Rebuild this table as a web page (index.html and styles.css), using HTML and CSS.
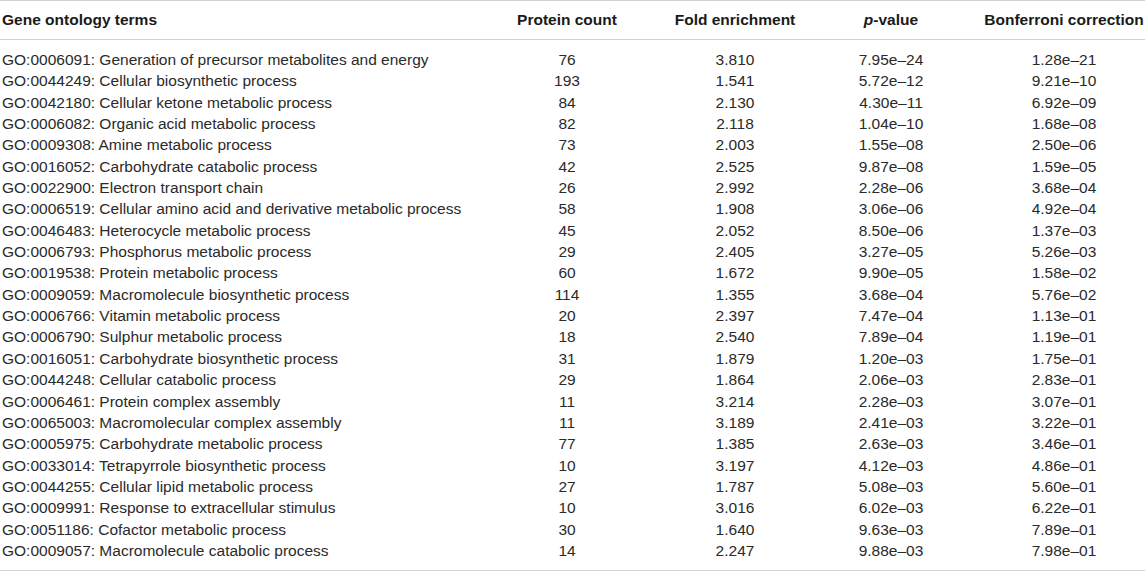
FILE: index.html
```html
<!DOCTYPE html>
<html>
<head>
<meta charset="utf-8">
<link rel="stylesheet" href="styles.css">
</head>
<body>
<table class="go-table">
  <colgroup>
    <col class="c-term"><col class="c-count"><col class="c-fold"><col class="c-p"><col class="c-bonf">
  </colgroup>
  <thead>
    <tr>
      <th class="term">Gene ontology terms</th>
      <th>Protein count</th>
      <th>Fold enrichment</th>
      <th><i>p</i>-value</th>
      <th>Bonferroni correction</th>
    </tr>
  </thead>
  <tbody>
    <tr><td class="term">GO:0006091: Generation of precursor metabolites and energy</td><td>76</td><td>3.810</td><td>7.95e–24</td><td>1.28e–21</td></tr>
    <tr><td class="term">GO:0044249: Cellular biosynthetic process</td><td>193</td><td>1.541</td><td>5.72e–12</td><td>9.21e–10</td></tr>
    <tr><td class="term">GO:0042180: Cellular ketone metabolic process</td><td>84</td><td>2.130</td><td>4.30e–11</td><td>6.92e–09</td></tr>
    <tr><td class="term">GO:0006082: Organic acid metabolic process</td><td>82</td><td>2.118</td><td>1.04e–10</td><td>1.68e–08</td></tr>
    <tr><td class="term">GO:0009308: Amine metabolic process</td><td>73</td><td>2.003</td><td>1.55e–08</td><td>2.50e–06</td></tr>
    <tr><td class="term">GO:0016052: Carbohydrate catabolic process</td><td>42</td><td>2.525</td><td>9.87e–08</td><td>1.59e–05</td></tr>
    <tr><td class="term">GO:0022900: Electron transport chain</td><td>26</td><td>2.992</td><td>2.28e–06</td><td>3.68e–04</td></tr>
    <tr><td class="term">GO:0006519: Cellular amino acid and derivative metabolic process</td><td>58</td><td>1.908</td><td>3.06e–06</td><td>4.92e–04</td></tr>
    <tr><td class="term">GO:0046483: Heterocycle metabolic process</td><td>45</td><td>2.052</td><td>8.50e–06</td><td>1.37e–03</td></tr>
    <tr><td class="term">GO:0006793: Phosphorus metabolic process</td><td>29</td><td>2.405</td><td>3.27e–05</td><td>5.26e–03</td></tr>
    <tr><td class="term">GO:0019538: Protein metabolic process</td><td>60</td><td>1.672</td><td>9.90e–05</td><td>1.58e–02</td></tr>
    <tr><td class="term">GO:0009059: Macromolecule biosynthetic process</td><td>114</td><td>1.355</td><td>3.68e–04</td><td>5.76e–02</td></tr>
    <tr><td class="term">GO:0006766: Vitamin metabolic process</td><td>20</td><td>2.397</td><td>7.47e–04</td><td>1.13e–01</td></tr>
    <tr><td class="term">GO:0006790: Sulphur metabolic process</td><td>18</td><td>2.540</td><td>7.89e–04</td><td>1.19e–01</td></tr>
    <tr><td class="term">GO:0016051: Carbohydrate biosynthetic process</td><td>31</td><td>1.879</td><td>1.20e–03</td><td>1.75e–01</td></tr>
    <tr><td class="term">GO:0044248: Cellular catabolic process</td><td>29</td><td>1.864</td><td>2.06e–03</td><td>2.83e–01</td></tr>
    <tr><td class="term">GO:0006461: Protein complex assembly</td><td>11</td><td>3.214</td><td>2.28e–03</td><td>3.07e–01</td></tr>
    <tr><td class="term">GO:0065003: Macromolecular complex assembly</td><td>11</td><td>3.189</td><td>2.41e–03</td><td>3.22e–01</td></tr>
    <tr><td class="term">GO:0005975: Carbohydrate metabolic process</td><td>77</td><td>1.385</td><td>2.63e–03</td><td>3.46e–01</td></tr>
    <tr><td class="term">GO:0033014: Tetrapyrrole biosynthetic process</td><td>10</td><td>3.197</td><td>4.12e–03</td><td>4.86e–01</td></tr>
    <tr><td class="term">GO:0044255: Cellular lipid metabolic process</td><td>27</td><td>1.787</td><td>5.08e–03</td><td>5.60e–01</td></tr>
    <tr><td class="term">GO:0009991: Response to extracellular stimulus</td><td>10</td><td>3.016</td><td>6.02e–03</td><td>6.22e–01</td></tr>
    <tr><td class="term">GO:0051186: Cofactor metabolic process</td><td>30</td><td>1.640</td><td>9.63e–03</td><td>7.89e–01</td></tr>
    <tr><td class="term">GO:0009057: Macromolecule catabolic process</td><td>14</td><td>2.247</td><td>9.88e–03</td><td>7.98e–01</td></tr>
  </tbody>
</table>
</body>
</html>
```

FILE: styles.css
```css
html, body {
  margin: 0;
  padding: 0;
  background: #ffffff;
}

.go-table {
  width: 1145px;
  table-layout: fixed;
  border-collapse: collapse;
  font-family: "Liberation Sans", Arial, sans-serif;
  font-size: 15.5px;
  color: #2a2a2a;
  border-top: 1px solid #d2d2d2;
  border-bottom: 1px solid #d2d2d2;
}

.c-term { width: 463px; }
.c-count { width: 208px; }
.c-fold { width: 128px; }
.c-p { width: 184px; }
.c-bonf { width: 162px; }

.go-table th,
.go-table td {
  padding: 0;
  text-align: center;
  white-space: nowrap;
}

.go-table th {
  font-weight: bold;
  height: 38px;
  line-height: 38px;
  border-bottom: 1px solid #d2d2d2;
  color: #1a1a1a;
}

.go-table td {
  height: 21.35px;
  line-height: 21.35px;
  font-weight: normal;
}

.go-table .term {
  text-align: left;
  padding-left: 2px;
}

.go-table tbody tr:first-child td {
  padding-top: 9px;
}

.go-table tbody tr:last-child td {
  padding-bottom: 9px;
}
```
